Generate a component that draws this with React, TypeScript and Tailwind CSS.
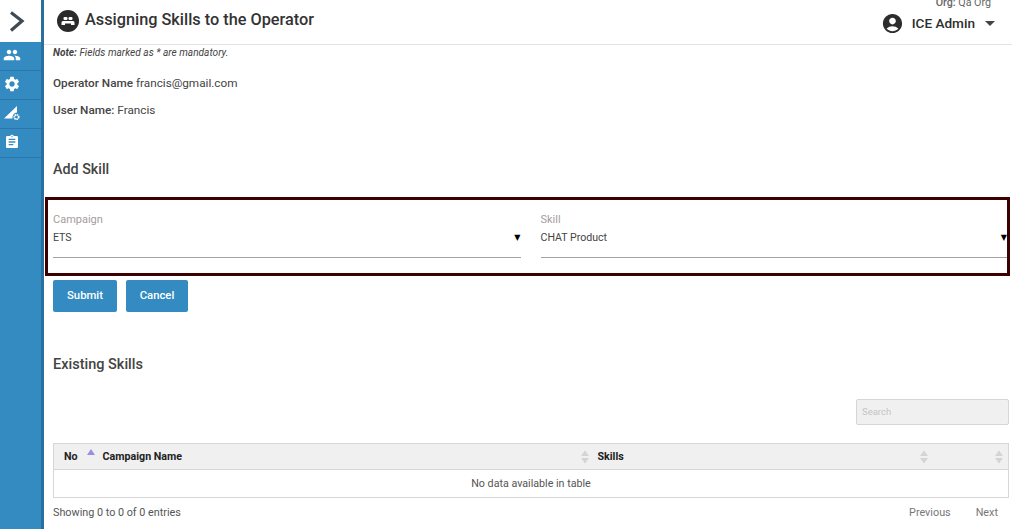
import { MdAccountCircle, MdArrowDropDown, MdAssignment, MdPeople, MdSettings } from "react-icons/md";

function SortIcon() {
  return (
    <svg width="10" height="14" viewBox="0 0 10 14" className="block">
      <path d="M5 0.5 L9 6 L1 6 Z" fill="#d4d4d4" />
      <path d="M5 13.5 L9 8 L1 8 Z" fill="#d4d4d4" />
    </svg>
  );
}

function SignalGear() {
  return (
    <svg width="18" height="18" viewBox="0 0 18 18" className="block">
      <path d="M1 13.5 L14 1 L14 7.5 A5 5 0 0 0 9.5 13.5 Z" fill="#fff" />
      <circle cx="13.5" cy="12" r="2.2" fill="none" stroke="#fff" strokeWidth="1.8" strokeDasharray="1.4 0.5" />
    </svg>
  );
}

function TitleIcon() {
  return (
    <svg width="22" height="22" viewBox="0 0 22 22" className="mt-[10px] block shrink-0">
      <circle cx="11" cy="11" r="11" fill="#2b2b2b" />
      <rect x="6.5" y="7" width="4" height="3" rx="1.2" fill="#fff" />
      <rect x="11.5" y="7" width="4" height="3" rx="1.2" fill="#fff" />
      <path d="M4.5 15 V12.5 Q4.5 11 6 11 H16 Q17.5 11 17.5 12.5 V15 H14 V13.5 H8 V15 Z" fill="#fff" />
    </svg>
  );
}

function SelectField({ label, value, className }: { label: string; value: string; className: string }) {
  return (
    <div className={`flex flex-col ${className}`}>
      <span className="text-[11px] leading-[14px] text-[#a39d9d]">{label}</span>
      <div className="flex h-[24px] items-start justify-between pt-[4px] text-[10.6px] leading-[14px] text-[#444]">
        <span>{value}</span>
        <span className="mt-[1px] font-['DejaVu_Sans',sans-serif] text-[8px] leading-[12px] text-black">▼</span>
      </div>
      <div className="mt-[6px] h-px bg-[#a3a3a3]" />
    </div>
  );
}

export default function App() {
  return (
    <div className="flex h-[529px] w-[1012px] overflow-hidden bg-white font-['Roboto',sans-serif] text-[#444]">
      {/* sidebar */}
      <aside className="flex w-[44px] shrink-0 flex-col border-r-[3px] border-[#2a6f9e] bg-[#338bc1]">
        <div className="flex h-[42px] items-center bg-white">
          <svg width="34" height="42" viewBox="0 0 34 42" className="block">
            <path d="M11 12.5 L22 21 L11 30.5" fill="none" stroke="#3f4a52" strokeWidth="3.2" />
          </svg>
        </div>
        <div className="flex h-[29px] items-center border-b border-[#2a78a8] pb-[2px] pl-[3px] text-white">
          <MdPeople size={18} />
        </div>
        <div className="flex h-[29px] items-center border-b border-[#2a78a8] pb-[3px] pl-[3px] text-white">
          <MdSettings size={18} />
        </div>
        <div className="flex h-[29px] items-center border-b border-[#2a78a8] pb-[1px] pl-[3px]">
          <SignalGear />
        </div>
        <div className="flex h-[29px] items-center border-b border-[#2a78a8] pb-[3px] pl-[4px] text-white">
          <MdAssignment size={16} />
        </div>
      </aside>

      <div className="flex min-w-0 flex-1 flex-col">
        {/* header */}
        <header className="relative flex h-[45px] shrink-0 items-start border-b border-[#e3e3e3] pl-[13px]">
          <TitleIcon />
          <h1 className="ml-[6px] mt-[10px] text-[16.3px] font-medium leading-[20px] text-[#333]">
            Assigning Skills to the Operator
          </h1>
          <div className="ml-auto flex flex-col items-end pr-[10px]">
            <div className="mt-[-4px] pr-[11px] text-[10.7px] leading-[14px] text-[#666]">
              <span className="font-medium">Org:</span> Qa Org
            </div>
            <div className="mt-[1px] flex items-center text-[#2d2d2d]">
              <MdAccountCircle size={23} />
              <span className="ml-[8px] text-[13.6px] font-medium leading-[20px]">ICE Admin</span>
              <span className="ml-[3px] w-[24px]">
                <MdArrowDropDown size={24} className="text-[#444]" />
              </span>
            </div>
          </div>
        </header>

        {/* page */}
        <main className="flex flex-1 flex-col">
          <div className="pl-[9px] pr-[3px]">
            <p className="mt-[2px] text-[10.15px] italic leading-[12px] text-[#444]">
              <span className="font-bold">Note:</span> Fields marked as * are mandatory.
            </p>
            <p className="mt-[16px] text-[11.75px] leading-[16px]">
              <span className="font-medium">Operator Name</span> francis@gmail.com
            </p>
            <p className="mt-[11px] text-[11.75px] leading-[16px]">
              <span className="font-medium">User Name:</span> Francis
            </p>
            <h2 className="mt-[41px] text-[14.3px] font-medium leading-[20px]">Add Skill</h2>
          </div>

          <div className="ml-[1px] mr-[2px] mt-[18px] flex h-[79px] border-[3px] border-[#3c0000] pl-[5px] pt-[13px]">
            <SelectField label="Campaign" value="ETS" className="w-[468px]" />
            <SelectField label="Skill" value="CHAT Product" className="ml-[20px] w-[467px]" />
          </div>

          <div className="ml-[9px] mt-[4px] flex gap-[9px]">
            <button className="h-[32px] w-[64px] rounded-[2px] bg-[#338bc1] text-[11.3px] font-medium text-white">
              Submit
            </button>
            <button className="h-[32px] w-[62px] rounded-[2px] bg-[#338bc1] text-[11.3px] font-medium text-white">
              Cancel
            </button>
          </div>

          <div className="pl-[9px] pr-[3px]">
            <h2 className="mt-[43px] text-[14.5px] font-medium leading-[20px]">Existing Skills</h2>
            <div className="mt-[24px] flex justify-end">
              <div className="flex h-[26px] w-[153px] items-center rounded-[2px] border border-[#d6d6d6] bg-[#f0f0f0] pl-[5px] pt-[1px] text-[9.5px] text-[#c4c4c4]">
                Search
              </div>
            </div>

            <table className="mt-[18px] w-[956px] table-fixed border-collapse border border-[#d6d6d6] text-[10.7px]">
              <thead>
                <tr className="h-[26px] bg-[#f0f0f0] text-left text-[#222]">
                  <th className="w-[49px] pl-[10px] pt-[1px] font-bold">
                    <div className="relative">
                      No
                      <svg width="8" height="6" viewBox="0 0 8 6" className="absolute left-[23px] top-0">
                        <path d="M4 0 L8 6 L0 6 Z" fill="#9c8fe0" />
                      </svg>
                    </div>
                  </th>
                  <th className="w-[495px] pt-[1px] font-bold">
                    <div className="flex items-center justify-between pr-[8px]">
                      Campaign Name
                      <SortIcon />
                    </div>
                  </th>
                  <th className="w-[339px] pt-[1px] font-bold">
                    <div className="flex items-center justify-between pr-[8px]">
                      Skills
                      <SortIcon />
                    </div>
                  </th>
                  <th className="pt-[1px]">
                    <div className="flex justify-end pr-[4px]">
                      <SortIcon />
                    </div>
                  </th>
                </tr>
              </thead>
              <tbody>
                <tr className="h-[28px] border-t border-[#d6d6d6]">
                  <td colSpan={4} className="pt-[1px] text-center text-[#555]">
                    No data available in table
                  </td>
                </tr>
              </tbody>
            </table>

            <div className="mt-[8px] flex items-center justify-between text-[10.8px] leading-[14px] text-[#555]">
              <span>Showing 0 to 0 of 0 entries</span>
              <div className="flex gap-[25px] pr-[11px] text-[#777]">
                <span>Previous</span>
                <span>Next</span>
              </div>
            </div>
          </div>
        </main>
      </div>
    </div>
  );
}
